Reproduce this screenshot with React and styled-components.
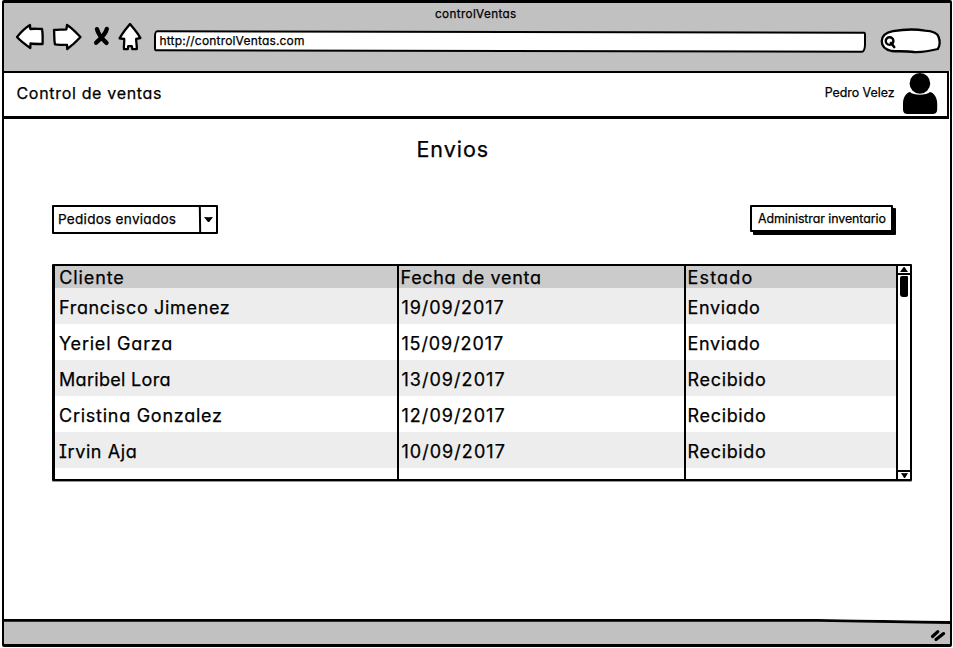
import React from "react";
import styled, { createGlobalStyle } from "styled-components";

const ink = "#000";
const chrome = "#c1c1c1";

const GlobalStyle = createGlobalStyle`
  *, *::before, *::after { box-sizing: border-box; }
  body {
    margin: 0;
    background: #fff;
    color: ${ink};
    font-family: Inter, "Liberation Sans", sans-serif;
    font-feature-settings: "cv11", "cv08";
    overflow: hidden;
  }
`;

const Text = styled.span`
  font-size: ${(p) => p.$size}px;
  letter-spacing: ${(p) => p.$track || 0}px;
  line-height: ${(p) => p.$line || 20}px;
  white-space: nowrap;
  -webkit-text-stroke: 0.25px ${ink};
`;

const Window = styled.div`
  display: flex;
  flex-direction: column;
  width: 950px;
  height: 647px;
  margin-left: 2px;
  border: 2px solid ${ink};
  border-top-width: 3px;
  border-bottom-width: 3px;
  border-radius: 2px;
`;

const BrowserHeader = styled.header`
  display: flex;
  flex-direction: column;
  height: 68px;
  background: ${chrome};
`;

const TitleBar = styled.div`
  display: flex;
  height: 20px;
  padding-left: 431px;
`;

const Toolbar = styled.div`
  display: flex;
  align-items: flex-start;
  padding-left: 11px;
`;

const Icon = styled.svg`
  display: block;
  flex: none;
  fill: #fff;
  stroke: ${ink};
  stroke-width: 2.3;
  stroke-linejoin: round;
  stroke-linecap: round;
`;

const AddressBar = styled.div`
  position: relative;
  display: flex;
  width: 712px;
  height: 21px;
  margin: 8px 0 0 7px;
  padding-left: 5.5px;
  &::before {
    content: "";
    position: absolute;
    inset: 0;
    background: #fff;
    border: 2px solid ${ink};
    border-radius: 3px 2px 4px 2px / 6px 3px 8px 3px;
    transform: rotate(0.13deg);
  }
`;

const Url = styled(Text)`
  position: relative;
`;

const SearchPill = styled(Icon)`
  margin: 5px 0 0 14px;
`;

const AppBar = styled.nav`
  display: flex;
  align-items: flex-start;
  height: 48px;
  border-top: 2px solid ${ink};
  border-bottom: 3px solid ${ink};
  border-right: 2px solid ${ink};
  margin-right: 1px;
  padding: 0 9px 0 12.5px;
`;

const Brand = styled.div`
  display: flex;
  padding-top: 9px;
`;

const User = styled.div`
  display: flex;
  gap: 7.5px;
  margin-left: auto;
`;

const UserName = styled.div`
  display: flex;
  padding-top: 10px;
`;

const Avatar = styled.svg`
  display: block;
  width: 36px;
  height: 43px;
  margin-top: -1px;
  fill: ${ink};
`;

const Main = styled.main`
  display: flex;
  flex: 1;
  flex-direction: column;
  padding: 15px 57px 0 48px;
`;

const Heading = styled.h1`
  display: flex;
  margin: 0;
  padding-left: 364.5px;
  font-weight: 400;
`;

const Actions = styled.div`
  display: flex;
  justify-content: space-between;
  height: 29px;
  margin-top: 41px;
`;

const Select = styled.div`
  display: flex;
  width: 166px;
  height: 29px;
  border: 2px solid ${ink};
  border-radius: 1px;
`;

const SelectValue = styled.div`
  flex: 1;
  padding-left: 4px;
`;

const SelectArrow = styled.div`
  display: grid;
  place-items: center;
  width: 17px;
  border-left: 2px solid ${ink};
  transform: skewX(0.8deg);
  svg { display: block; }
`;

const Button = styled.button`
  display: flex;
  width: 143px;
  height: 27px;
  padding: 0 0 0 6px;
  font: inherit;
  font-feature-settings: inherit;
  color: inherit;
  background: #fff;
  border: 2px solid ${ink};
  border-radius: 1px;
  box-shadow: 3px 3px 0 ${ink};
`;

const TableFrame = styled.div`
  display: flex;
  width: 860px;
  height: 217px;
  margin-top: 30px;
  border: 2px solid ${ink};
  border-left-width: 3px;
  border-radius: 1px;
  box-shadow: 0 1px 0 #999;
`;

const Column = styled.div`
  display: flex;
  flex: none;
  flex-direction: column;
  width: ${(p) => p.$width}px;
  border-right: 2px solid ${ink};
`;

const HeadCell = styled.div`
  height: 22px;
  padding: 1px 0 0 ${(p) => p.$pad}px;
  background: #cbcbcb;
`;

const Cell = styled.div`
  height: 36px;
  padding: 2px 0 0 ${(p) => p.$pad}px;
  &:nth-child(even) { background: #ededed; }
`;

const Scrollbar = styled.div`
  display: flex;
  flex: 1;
  flex-direction: column;
`;

const ScrollButton = styled.div`
  display: grid;
  place-items: center;
  height: 9px;
  border-bottom: ${(p) => (p.$up ? `2px solid ${ink}` : "none")};
  border-top: ${(p) => (p.$up ? "none" : `2px solid ${ink}`)};
  svg { display: block; }
`;

const Track = styled.div`
  flex: 1;
  padding: 1px 0 0 2px;
`;

const Thumb = styled.div`
  width: 8px;
  height: 21px;
  background: ${ink};
  border-radius: 2px 1px 2px 3px;
`;

const Footer = styled.footer`
  position: relative;
  display: flex;
  justify-content: flex-end;
  height: 25px;
  background: ${chrome};
  clip-path: polygon(0 0, 86% 0, 100% 2px, 100% 100%, 0 100%);
  &::before {
    content: "";
    position: absolute;
    inset: 0 0 auto;
    height: 5px;
    background: ${ink};
    clip-path: polygon(0 0, 86% 0, 100% 2px, 100% 5px, 86% 2.7px, 0 2.7px);
  }
`;

const Grip = styled.svg`
  display: block;
  margin: 10px 3px 0 0;
  stroke: ${ink};
  stroke-width: 3.2;
  stroke-linecap: round;
`;

const columns = [
  {
    width: 344,
    headPad: 4.2,
    pad: 4,
    title: ["Cliente", 0.9],
    rows: [
      ["Francisco Jimenez", 0.66],
      ["Yeriel Garza", 0.78],
      ["Maribel Lora", 0.31],
      ["Cristina Gonzalez", 0.74],
      ["Irvin Aja", 0.6],
    ],
  },
  {
    width: 287,
    headPad: 1.6,
    pad: 2.4,
    title: ["Fecha de venta", 0.67],
    rows: [
      ["19/09/2017", 0.95],
      ["15/09/2017", 0.9],
      ["13/09/2017", 1.05],
      ["12/09/2017", 1.07],
      ["10/09/2017", 1.05],
    ],
  },
  {
    width: 212,
    headPad: 1.6,
    pad: 1.6,
    title: ["Estado", 1.15],
    rows: [
      ["Enviado", 0.62],
      ["Enviado", 0.62],
      ["Recibido", 0.65],
      ["Recibido", 0.65],
      ["Recibido", 0.65],
    ],
  },
];

const Triangle = ({ width, height, up }) => (
  <svg width={width} height={height} viewBox="0 0 10 6" preserveAspectRatio="none">
    <path d={up ? "M4.6 0 L5.6 0 L10 6 L0 6 Z" : "M0 0 Q5 .4 10 0 L5.8 6 L4.4 6 Z"} />
  </svg>
);

export default function App() {
  return (
    <>
      <GlobalStyle />
      <Window>
        <BrowserHeader>
          <TitleBar>
            <Text $size={11.7} $track={0.38} $line={23}>controlVentas</Text>
          </TitleBar>
          <Toolbar>
            <Icon width="132" height="29" viewBox="15 23 132 29">
              <path d="M17 37 C21 32 25 28 30 25 L30.3 29 C34 28.4 38 29 42 29 C43 34 42.6 39 42.6 44 C39 44 34 44 30.5 43.5 L30.3 48 C26 45 21 41.5 17 37 Z" />
              <path d="M54 30 C58 29.4 62 29.8 66.4 29.3 L67 25 C72 28 76.5 33 80.5 37 C76 42 72 45.5 67.2 49 L67 44.8 C63 45.2 59 44.8 55 44.4 C53.8 39.5 54.6 35 54 30 Z" />
              <path d="M97 29.2 C98.4 34.5 101.8 38.5 106.5 42.8 M106.8 29 C105.5 34.5 101 38.5 96.2 42.7" strokeWidth="4.4" fill="none" />
              <path d="M130 24 C133.4 28 137.5 32.5 140.4 38 L136.2 38.8 C136 42 137 45.5 136.8 49 L132.4 49.2 L131.8 46.2 L128.2 46.2 L127.8 49.2 L124 49.2 C123.6 46 124.5 42 124.2 39 L119.6 38.4 C122.4 33 126.2 28.5 130 24 Z" />
            </Icon>
            <AddressBar>
              <Url $size={12} $track={0.18} $line={20}>http://controlVentas.com</Url>
            </AddressBar>
            <SearchPill width="62" height="27" viewBox="880 28 62 27">
              <path d="M893 31.2 C903 29.4 915 28.9 925 30.6 C932 31 937.5 33 938.6 37 C940 41 939.8 46 937.8 49 C930 51 922 52.4 914 52 C905 50.8 898 51.6 891.5 51 C885 49.5 881.6 45.5 881.8 41 C882 36 886 32.5 893 31.2 Z" />
              <circle cx="889.6" cy="41" r="3.8" fill="none" strokeWidth="2.4" />
              <path d="M891 43 L894.2 47" strokeWidth="2.6" />
            </SearchPill>
          </Toolbar>
        </BrowserHeader>
        <AppBar>
          <Brand>
            <Text $size={16} $track={0.68} $line={22}>Control de ventas</Text>
          </Brand>
          <User>
            <UserName>
              <Text $size={12.4} $track={-0.02}>Pedro Velez</Text>
            </UserName>
            <Avatar viewBox="902 72 36 43">
              <circle cx="919.9" cy="83.4" r="10.3" />
              <path d="M910 92 C913 95.5 926 95.8 930 92 C934.5 93 937.2 98 937.2 104 L937.2 109.5 C937.2 112.5 935.5 114 932.5 114 L907.8 114 C904.6 114 903 112.5 903 109.5 L903 104 C903 98 905.5 93 910 92 Z" />
            </Avatar>
          </User>
        </AppBar>
        <Main>
          <Heading>
            <Text $size={21.5} $track={0.95} $line={30}>Envios</Text>
          </Heading>
          <Actions>
            <Select>
              <SelectValue>
                <Text $size={13.6} $track={0.25} $line={24}>Pedidos enviados</Text>
              </SelectValue>
              <SelectArrow>
                <Triangle width={9} height={5} />
              </SelectArrow>
            </Select>
            <Button type="button">
              <Text $size={12.4} $track={-0.07} $line={23}>Administrar inventario</Text>
            </Button>
          </Actions>
          <TableFrame>
            {columns.map((col) => (
              <Column key={col.title[0]} $width={col.width}>
                <HeadCell $pad={col.headPad}>
                  <Text $size={18} $track={col.title[1]} $line={22}>{col.title[0]}</Text>
                </HeadCell>
                {col.rows.map(([label, track], i) => (
                  <Cell key={i} $pad={col.pad}>
                    <Text $size={18} $track={track} $line={36}>{label}</Text>
                  </Cell>
                ))}
              </Column>
            ))}
            <Scrollbar>
              <ScrollButton $up>
                <Triangle width={8} height={5} up />
              </ScrollButton>
              <Track>
                <Thumb />
              </Track>
              <ScrollButton>
                <Triangle width={7} height={5} />
              </ScrollButton>
            </Scrollbar>
          </TableFrame>
        </Main>
        <Footer>
          <Grip width="17" height="13" viewBox="931 629 17 13">
            <path d="M933.5 636.5 L938.8 631.6 M937 639.6 L944.6 633.6" />
          </Grip>
        </Footer>
      </Window>
    </>
  );
}
